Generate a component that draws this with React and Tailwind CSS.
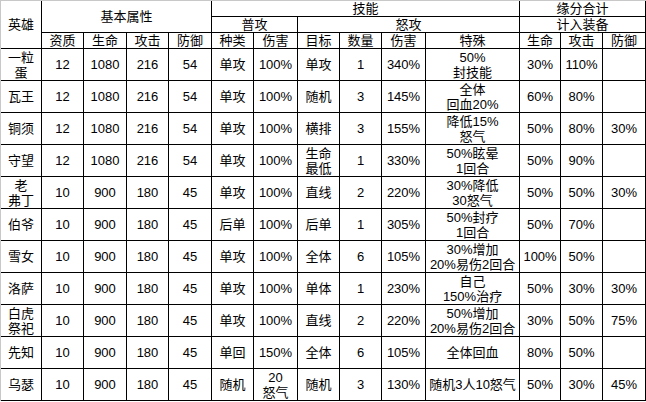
const cols = [41, 42, 43, 42, 43, 42, 44, 42, 42, 44, 94, 41, 42, 43]

const rows = [
  ["一粒\n蛋", "12", "1080", "216", "54", "单攻", "100%", "单攻", "1", "340%", "50%\n封技能", "30%", "110%", ""],
  ["瓦王", "12", "1080", "216", "54", "单攻", "100%", "随机", "3", "145%", "全体\n回血20%", "60%", "80%", ""],
  ["铜须", "12", "1080", "216", "54", "单攻", "100%", "横排", "3", "155%", "降低15%\n怒气", "50%", "80%", "30%"],
  ["守望", "12", "1080", "216", "54", "单攻", "100%", "生命\n最低", "1", "330%", "50%眩晕\n1回合", "50%", "90%", ""],
  ["老\n弗丁", "10", "900", "180", "45", "单攻", "100%", "直线", "2", "220%", "30%降低\n30怒气", "50%", "50%", "30%"],
  ["伯爷", "10", "900", "180", "45", "后单", "100%", "后单", "1", "305%", "50%封疗\n1回合", "50%", "70%", ""],
  ["雪女", "10", "900", "180", "45", "单攻", "100%", "全体", "6", "105%", "30%增加\n20%易伤2回合", "100%", "50%", ""],
  ["洛萨", "10", "900", "180", "45", "单攻", "100%", "单体", "1", "230%", "自己\n150%治疗", "50%", "30%", "30%"],
  ["白虎\n祭祀", "10", "900", "180", "45", "单攻", "100%", "直线", "2", "220%", "50%增加\n20%易伤2回合", "30%", "50%", "75%"],
  ["先知", "10", "900", "180", "45", "单回", "150%", "全体", "6", "105%", "全体回血", "80%", "50%", ""],
  ["乌瑟", "10", "900", "180", "45", "随机", "20\n怒气", "随机", "3", "130%", "随机3人10怒气", "50%", "30%", "45%"],
]

const th = "border-r border-b border-black p-0 font-normal text-center align-middle h-[16px] leading-[15px] whitespace-nowrap"
const td = "border-r border-b border-black p-0 text-center align-middle h-[32px] leading-[15px] whitespace-pre-line"

const App = () => {
  return (
    <div
      className="w-[646px] h-[402px] bg-white text-black text-[13px] overflow-hidden"
      style={{ fontFamily: '"Liberation Sans", "Noto Sans CJK SC", sans-serif' }}
    >
      <table className="table-fixed border-separate border-spacing-0 border-l border-t border-[#c8c8c8] w-[646px]">
        <colgroup>
          {cols.map((w, i) => (
            <col key={i} style={{ width: w }} />
          ))}
        </colgroup>
        <thead>
          <tr>
            <th rowSpan={3} className={th}>英雄</th>
            <th rowSpan={2} colSpan={4} className={th}>基本属性</th>
            <th colSpan={6} className={th}>技能</th>
            <th colSpan={3} className={th}>缘分合计</th>
          </tr>
          <tr>
            <th colSpan={2} className={th}>普攻</th>
            <th colSpan={4} className={th}>怒攻</th>
            <th colSpan={3} className={th}>计入装备</th>
          </tr>
          <tr>
            {["资质", "生命", "攻击", "防御", "种类", "伤害", "目标", "数量", "伤害", "特殊", "生命", "攻击", "防御"].map((h, i) => (
              <th key={i} className={th}>{h}</th>
            ))}
          </tr>
        </thead>
        <tbody>
          {rows.map((r, i) => (
            <tr key={i}>
              {r.map((c, j) => (
                <td key={j} className={td}>{c}</td>
              ))}
            </tr>
          ))}
        </tbody>
      </table>
    </div>
  )
}

export default App
